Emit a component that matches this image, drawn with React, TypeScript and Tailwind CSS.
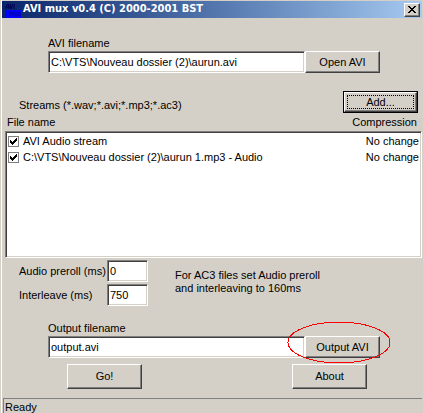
import { useState } from 'react'
import type { ReactNode } from 'react'

const sunken =
    'border border-t-[#808080] border-l-[#808080] border-r-white border-b-white shadow-[inset_1px_1px_0_#404040,inset_-1px_-1px_0_#d4d0c8]'
const raised =
    'bg-[#d4d0c8] border border-t-white border-l-white border-r-[#404040] border-b-[#404040] shadow-[inset_-1px_-1px_0_#808080]'
const field = `bg-white px-[2px] h-[22px] min-w-0 outline-none ${sunken}`

const initialStreams = [
    { name: 'AVI Audio stream', compression: 'No change', checked: true },
    { name: 'C:\\VTS\\Nouveau dossier (2)\\aurun 1.mp3 - Audio', compression: 'No change', checked: true },
]

function Button({ className, children }: { className: string; children: ReactNode }) {
    return (
        <button type="button" className={`shrink-0 w-[75px] text-center ${raised} ${className}`}>
            {children}
        </button>
    )
}

function TitleBar() {
    return (
        <header className="flex items-center h-[17px] pl-[3px] pr-[2px] bg-linear-to-r from-[#0a246a] to-[#a6caf0]">
            <svg width="16" height="16" viewBox="0 0 16 16" aria-hidden="true">
                <rect y="8" width="16" height="8" fill="#0000ff" />
                <path d="M1 7V4l2-2 1 2v3M1 5h3M5 2l1 5 2-5M9 2v5" fill="none" stroke="#000050" />
                <path d="M5 14v-4l2 2 1-2v4M10 10v4h2v-4M13 10l3 4M16 10l-3 4" fill="none" stroke="#0000a8" />
            </svg>
            <h1 className="flex-1 pl-[2px] font-['DejaVu_Sans_Condensed','DejaVu_Sans',sans-serif] text-[11px] font-bold text-white whitespace-nowrap">
                AVI mux v0.4 (C) 2000-2001 BST
            </h1>
            <button type="button" aria-label="Close" className={`flex items-center justify-center w-[16px] h-[14px] ${raised}`}>
                <svg width="8" height="7" viewBox="0 0 8 7" shapeRendering="crispEdges">
                    <path d="M0 0h2v1h1v1h2V1h1V0h2v1H7v1H6v1H5v1h1v1h1v1h1v1H6V6H5V5H3v1H2v1H0V6h1V5h1V4h1V3H2V2H1V1H0z" />
                </svg>
            </button>
        </header>
    )
}

function StreamList() {
    const [streams, setStreams] = useState(initialStreams)

    const toggle = (index: number) =>
        setStreams(streams.map((s, i) => (i === index ? { ...s, checked: !s.checked } : s)))

    return (
        <table className="block ml-[3px]">
            <thead className="block">
                <tr className="flex justify-between pl-[2px] pr-[5px] h-[18px] leading-[18px]">
                    <th className="font-normal">File name</th>
                    <th className="font-normal">Compression</th>
                </tr>
            </thead>
            <tbody className={`block h-[127px] pt-px px-[2px] bg-white ${sunken}`}>
                {streams.map((stream, i) => (
                    <tr key={stream.name} className="flex justify-between h-[16px] leading-[16px]">
                        <td>
                            <label className="flex items-center">
                                <span className="relative flex w-[11px] h-[11px] mr-[4px]">
                                    <input
                                        type="checkbox"
                                        checked={stream.checked}
                                        onChange={() => toggle(i)}
                                        className="peer appearance-none w-[11px] h-[11px] border border-[#808080] bg-white"
                                    />
                                    <svg
                                        width="7"
                                        height="7"
                                        viewBox="0 0 7 7"
                                        shapeRendering="crispEdges"
                                        className="absolute top-[2px] left-[2px] hidden peer-checked:block pointer-events-none"
                                    >
                                        <path d="M0 2h1v1h1v1h1V3h1V2h1V1h1V0h1v3H6v1H5v1H4v1H3v1H2V6H1V5H0z" />
                                    </svg>
                                </span>
                                {stream.name}
                            </label>
                        </td>
                        <td>{stream.compression}</td>
                    </tr>
                ))}
            </tbody>
        </table>
    )
}

export default function App() {
    return (
        <main className="flex flex-col bg-[#d4d0c8] border-l border-[#d4d0c8] font-['Liberation_Sans',Arial,sans-serif] text-[11px] text-black">
            <div className="border-l border-white pt-px pr-px">
                <TitleBar />

                <section className="pt-[17px] pl-[46px] pr-[42px]">
                    <label htmlFor="avi" className="block h-[16px] leading-[16px]">AVI filename</label>
                    <div className="flex">
                        <input id="avi" className={`flex-1 ${field}`} defaultValue="C:\VTS\Nouveau dossier (2)\aurun.avi" />
                        <Button className="h-[22px]">Open AVI</Button>
                    </div>
                </section>

                <section className="pt-[18px]">
                    <div className="flex justify-between items-end pl-[17px] pr-[4px]">
                        <span className="leading-[16px]">Streams (*.wav;*.avi;*.mp3;*.ac3)</span>
                        <div className="flex border border-black">
                            <button type="button" className={`w-[73px] h-[20px] p-[2px] ${raised}`}>
                                <span className="flex items-center justify-center h-full border border-dotted border-black">Add...</span>
                            </button>
                        </div>
                    </div>
                    <StreamList />
                </section>

                <section className="flex pl-[17px] pt-[2px]">
                    <div className="grid grid-cols-[88px_41px] gap-y-[2px] items-center whitespace-nowrap">
                        <label htmlFor="preroll">Audio preroll (ms)</label>
                        <input id="preroll" className={field} defaultValue="0" />
                        <label htmlFor="interleave">Interleave (ms)</label>
                        <input id="interleave" className={field} defaultValue="750" />
                    </div>
                    <p className="pl-[27px] pt-[9px] leading-[13px] whitespace-nowrap">
                        For AC3 files set Audio preroll
                        <br />
                        and interleaving to 160ms
                    </p>
                </section>

                <section className="pt-[14px] pl-[46px] pr-[42px]">
                    <label htmlFor="output" className="block h-[16px] leading-[16px]">Output filename</label>
                    <div className="flex">
                        <input id="output" className={`flex-1 ${field}`} defaultValue="output.avi" />
                        <div className="relative flex">
                            <Button className="h-[22px]">Output AVI</Button>
                            <svg
                                width="104"
                                height="43"
                                viewBox="0 0 104 43"
                                shapeRendering="crispEdges"
                                aria-hidden="true"
                                className="absolute -top-[15px] -left-[18px] max-w-none pointer-events-none"
                            >
                                <ellipse cx="52" cy="21.5" rx="51" ry="20.5" fill="none" stroke="#ff0000" />
                            </svg>
                        </div>
                    </div>
                </section>

                <div className="flex justify-between pt-[6px] pl-[65px] pr-[55px]">
                    <Button className="h-[25px]">Go!</Button>
                    <Button className="h-[25px]">About</Button>
                </div>

                <footer className="mt-[9px] ml-px h-[15px] pl-px border-t border-l border-[#808080] leading-[16px]">Ready</footer>
            </div>
        </main>
    )
}
